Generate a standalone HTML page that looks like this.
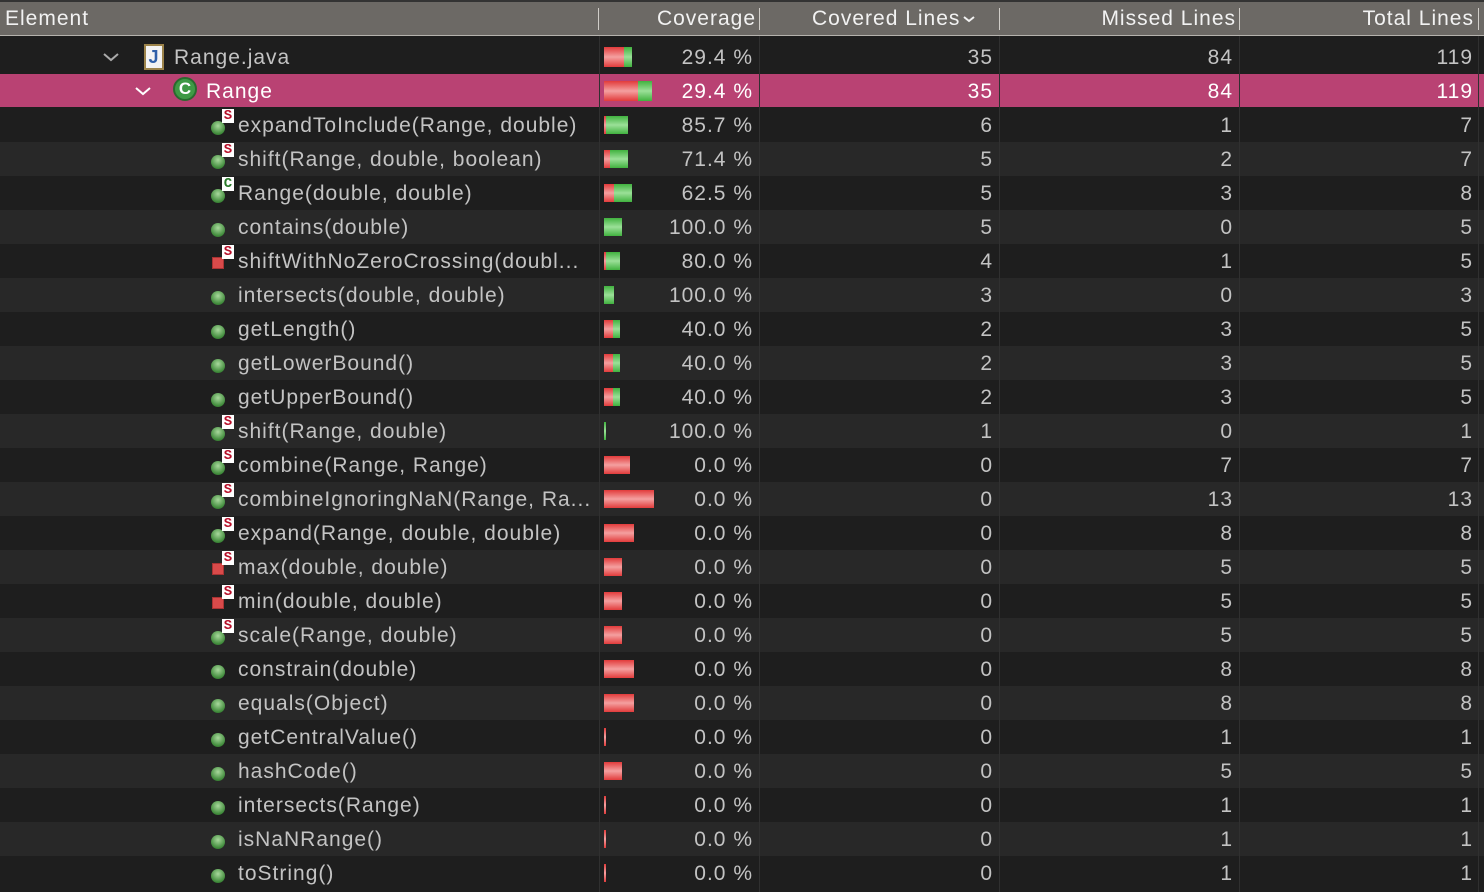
<!DOCTYPE html>
<html><head><meta charset="utf-8"><style>
body{margin:0;width:1484px;height:892px;background:#1e1e1e;overflow:hidden;font-family:"Liberation Sans",sans-serif;font-size:21px;letter-spacing:1px;color:#c3c3c3;position:relative}
.hd{position:absolute;left:0;top:2px;width:1484px;height:33px;background:#6c6965;border-bottom:1px solid #b5b2ad;color:#f2f2f2}
.hd span{position:absolute;top:5px}
.hs{position:absolute;top:6px;width:1px;height:22px;background:#d0cdc8}
.r{position:absolute;left:0;width:1484px;height:34px}
.r.o{background:#282828}
.r.h{background:#b94273;color:#fff}
.r span{position:absolute;top:6px;white-space:nowrap}
.n{left:238px}
.p{right:731px}.c{right:491px}.m{right:251px}.t{right:11px}
.bar{position:absolute;left:604px;top:8px;height:18px;background:linear-gradient(#41b23f,#9be098 50%,#41b23f)}
.bar i{position:absolute;left:0;top:0;bottom:0;background:linear-gradient(#e23b3b,#f4a0a0 50%,#e23b3b)}
.g{position:absolute;left:211px;top:13px;width:14px;height:14px;border-radius:50%;background:radial-gradient(circle at 50% 35%,#a8d89c,#3f8a3a 70%,#2a5e27)}
.q{position:absolute;left:212px;top:13px;width:12px;height:12px;background:#d94a4a;border:1px solid #a83333;box-sizing:border-box}
.s{position:absolute;left:222px;top:1px;width:12px;height:14px;background:#fff;color:#b8102a;font-size:14px;font-weight:bold;line-height:14px;text-align:center;letter-spacing:0;font-family:"Liberation Mono",monospace}
.sep{position:absolute;top:36px;width:1px;height:856px;background:#303030}
</style></head><body>
<div style="position:absolute;left:0;top:0;width:1484px;height:2px;background:#333"></div>
<div class="hd">
<span style="left:5px">Element</span>
<div class="hs" style="left:598px"></div>
<span style="right:728px">Coverage</span>
<div class="hs" style="left:759px"></div>
<span style="left:812px">Covered Lines<svg width="14" height="10" viewBox="0 0 14 10" style="vertical-align:middle;margin-left:2px"><path d="M2 3l5 4 5-4" stroke="#f2f2f2" stroke-width="2" fill="none"/></svg></span>
<div class="hs" style="left:999px"></div>
<span style="right:248px">Missed Lines</span>
<div class="hs" style="left:1239px"></div>
<span style="right:10px">Total Lines</span>
<div class="hs" style="left:1478px"></div>
</div>

<div class="r" style="top:40px"><svg style="position:absolute;left:102px;top:10px" width="18" height="14"><path d="M2 4l7 6 7-6" stroke="#aaa" stroke-width="2" fill="none"/></svg><div style="position:absolute;left:144px;top:4px;width:20px;height:26px;background:#f3f3f3;border:2px solid #9c834a;box-sizing:border-box;color:#2f5fa8;font-weight:bold;font-size:18px;text-align:center;line-height:22px">J</div><span style="left:174px">Range.java</span><div class="bar" style="width:28px;height:20px;top:7px"><i style="width:20px"></i></div><span class="p">29.4 %</span><span class="c">35</span><span class="m">84</span><span class="t">119</span></div>
<div class="r h" style="top:74px;height:33px"><svg style="position:absolute;left:134px;top:10px" width="18" height="14"><path d="M2 4l7 6 7-6" stroke="#fff" stroke-width="2" fill="none"/></svg><div style="position:absolute;left:173px;top:3px;width:24px;height:24px;border-radius:50%;background:#3f9a45;border:2px solid #2a6a2f;box-sizing:border-box;color:#fff;font-weight:bold;font-size:17px;text-align:center;line-height:20px;letter-spacing:0">C</div><span style="left:206px">Range</span><div class="bar" style="width:48px;height:20px;top:7px"><i style="width:34px"></i></div><span class="p">29.4 %</span><span class="c">35</span><span class="m">84</span><span class="t">119</span></div>

<div class="r" style="top:108px"><div class="g"></div><div class="s">S</div><span class="n">expandToInclude(Range, double)</span><div class="bar" style="width:24px"><i style="width:2px"></i></div><span class="p">85.7 %</span><span class="c">6</span><span class="m">1</span><span class="t">7</span></div>
<div class="r o" style="top:142px"><div class="g"></div><div class="s">S</div><span class="n">shift(Range, double, boolean)</span><div class="bar" style="width:24px"><i style="width:6px"></i></div><span class="p">71.4 %</span><span class="c">5</span><span class="m">2</span><span class="t">7</span></div>
<div class="r" style="top:176px"><div class="g"></div><div class="s" style="color:#2a7a2a">C</div><span class="n">Range(double, double)</span><div class="bar" style="width:28px"><i style="width:10px"></i></div><span class="p">62.5 %</span><span class="c">5</span><span class="m">3</span><span class="t">8</span></div>
<div class="r o" style="top:210px"><div class="g"></div><span class="n">contains(double)</span><div class="bar" style="width:18px"></div><span class="p">100.0 %</span><span class="c">5</span><span class="m">0</span><span class="t">5</span></div>
<div class="r" style="top:244px"><div class="q"></div><div class="s">S</div><span class="n">shiftWithNoZeroCrossing(doubl...</span><div class="bar" style="width:16px"><i style="width:2px"></i></div><span class="p">80.0 %</span><span class="c">4</span><span class="m">1</span><span class="t">5</span></div>
<div class="r o" style="top:278px"><div class="g"></div><span class="n">intersects(double, double)</span><div class="bar" style="width:10px"></div><span class="p">100.0 %</span><span class="c">3</span><span class="m">0</span><span class="t">3</span></div>
<div class="r" style="top:312px"><div class="g"></div><span class="n">getLength()</span><div class="bar" style="width:16px"><i style="width:9px"></i></div><span class="p">40.0 %</span><span class="c">2</span><span class="m">3</span><span class="t">5</span></div>
<div class="r o" style="top:346px"><div class="g"></div><span class="n">getLowerBound()</span><div class="bar" style="width:16px"><i style="width:9px"></i></div><span class="p">40.0 %</span><span class="c">2</span><span class="m">3</span><span class="t">5</span></div>
<div class="r" style="top:380px"><div class="g"></div><span class="n">getUpperBound()</span><div class="bar" style="width:16px"><i style="width:9px"></i></div><span class="p">40.0 %</span><span class="c">2</span><span class="m">3</span><span class="t">5</span></div>
<div class="r o" style="top:414px"><div class="g"></div><div class="s">S</div><span class="n">shift(Range, double)</span><div class="bar" style="width:2px"></div><span class="p">100.0 %</span><span class="c">1</span><span class="m">0</span><span class="t">1</span></div>
<div class="r" style="top:448px"><div class="g"></div><div class="s">S</div><span class="n">combine(Range, Range)</span><div class="bar" style="width:26px"><i style="width:26px"></i></div><span class="p">0.0 %</span><span class="c">0</span><span class="m">7</span><span class="t">7</span></div>
<div class="r o" style="top:482px"><div class="g"></div><div class="s">S</div><span class="n">combineIgnoringNaN(Range, Ra...</span><div class="bar" style="width:50px"><i style="width:50px"></i></div><span class="p">0.0 %</span><span class="c">0</span><span class="m">13</span><span class="t">13</span></div>
<div class="r" style="top:516px"><div class="g"></div><div class="s">S</div><span class="n">expand(Range, double, double)</span><div class="bar" style="width:30px"><i style="width:30px"></i></div><span class="p">0.0 %</span><span class="c">0</span><span class="m">8</span><span class="t">8</span></div>
<div class="r o" style="top:550px"><div class="q"></div><div class="s">S</div><span class="n">max(double, double)</span><div class="bar" style="width:18px"><i style="width:18px"></i></div><span class="p">0.0 %</span><span class="c">0</span><span class="m">5</span><span class="t">5</span></div>
<div class="r" style="top:584px"><div class="q"></div><div class="s">S</div><span class="n">min(double, double)</span><div class="bar" style="width:18px"><i style="width:18px"></i></div><span class="p">0.0 %</span><span class="c">0</span><span class="m">5</span><span class="t">5</span></div>
<div class="r o" style="top:618px"><div class="g"></div><div class="s">S</div><span class="n">scale(Range, double)</span><div class="bar" style="width:18px"><i style="width:18px"></i></div><span class="p">0.0 %</span><span class="c">0</span><span class="m">5</span><span class="t">5</span></div>
<div class="r" style="top:652px"><div class="g"></div><span class="n">constrain(double)</span><div class="bar" style="width:30px"><i style="width:30px"></i></div><span class="p">0.0 %</span><span class="c">0</span><span class="m">8</span><span class="t">8</span></div>
<div class="r o" style="top:686px"><div class="g"></div><span class="n">equals(Object)</span><div class="bar" style="width:30px"><i style="width:30px"></i></div><span class="p">0.0 %</span><span class="c">0</span><span class="m">8</span><span class="t">8</span></div>
<div class="r" style="top:720px"><div class="g"></div><span class="n">getCentralValue()</span><div class="bar" style="width:2px"><i style="width:2px"></i></div><span class="p">0.0 %</span><span class="c">0</span><span class="m">1</span><span class="t">1</span></div>
<div class="r o" style="top:754px"><div class="g"></div><span class="n">hashCode()</span><div class="bar" style="width:18px"><i style="width:18px"></i></div><span class="p">0.0 %</span><span class="c">0</span><span class="m">5</span><span class="t">5</span></div>
<div class="r" style="top:788px"><div class="g"></div><span class="n">intersects(Range)</span><div class="bar" style="width:2px"><i style="width:2px"></i></div><span class="p">0.0 %</span><span class="c">0</span><span class="m">1</span><span class="t">1</span></div>
<div class="r o" style="top:822px"><div class="g"></div><span class="n">isNaNRange()</span><div class="bar" style="width:2px"><i style="width:2px"></i></div><span class="p">0.0 %</span><span class="c">0</span><span class="m">1</span><span class="t">1</span></div>
<div class="r" style="top:856px"><div class="g"></div><span class="n">toString()</span><div class="bar" style="width:2px"><i style="width:2px"></i></div><span class="p">0.0 %</span><span class="c">0</span><span class="m">1</span><span class="t">1</span></div>

<div class="sep" style="left:599px"></div><div class="sep" style="left:759px"></div><div class="sep" style="left:999px"></div><div class="sep" style="left:1239px"></div><div class="sep" style="left:1478px"></div>
</body></html>
